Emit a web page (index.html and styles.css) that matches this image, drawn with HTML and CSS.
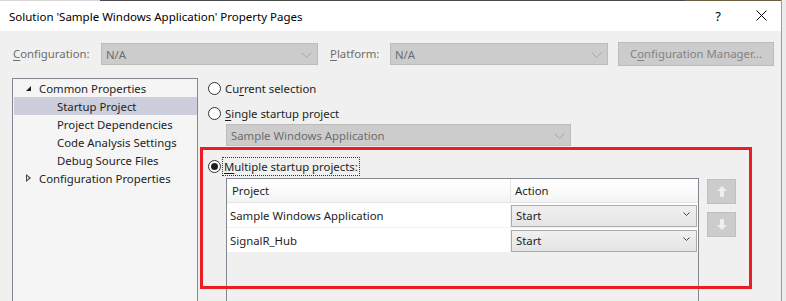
FILE: index.html
```html
<!DOCTYPE html>
<html>
<head>
<meta charset="utf-8">
<link rel="stylesheet" href="styles.css">
</head>
<body>
<div class="window">
  <div class="titlebar">
    <span class="title">Solution 'Sample Windows Application' Property Pages</span>
    <span class="help">?</span>
    <span class="close">
      <svg width="11" height="11" viewBox="0 0 11 11"><path d="M0.5 0.5 L10.5 10.5 M10.5 0.5 L0.5 10.5" stroke="#000" stroke-width="1" fill="none"/></svg>
    </span>
  </div>

  <div class="toolbar">
    <span class="lbl lbl-config"><u>C</u>onfiguration:</span>
    <div class="combo combo-config"><span>N/A</span>
      <svg class="chev" width="11" height="6" viewBox="0 0 11 6"><path d="M0.5 0.5 L5.5 5.5 L10.5 0.5" stroke="#a8a8a8" fill="none"/></svg>
    </div>
    <span class="lbl lbl-platform"><u>P</u>latform:</span>
    <div class="combo combo-platform"><span>N/A</span>
      <svg class="chev" width="11" height="6" viewBox="0 0 11 6"><path d="M0.5 0.5 L5.5 5.5 L10.5 0.5" stroke="#a8a8a8" fill="none"/></svg>
    </div>
    <div class="btn-manager">C<u>o</u>nfiguration Manager...</div>
  </div>

  <div class="main">
    <div class="tree">
      <div class="node"><span class="tri-open"></span>Common Properties</div>
      <div class="node child selected">Startup Project</div>
      <div class="node child">Project Dependencies</div>
      <div class="node child">Code Analysis Settings</div>
      <div class="node child">Debug Source Files</div>
      <div class="node"><span class="tri-closed"></span>Configuration Properties</div>
    </div>

    <div class="panel">
      <label class="radio-row r1"><span class="radio"></span>Cu<u>r</u>rent selection</label>
      <label class="radio-row r2"><span class="radio"></span><u>S</u>ingle startup project</label>
      <div class="combo combo-single"><span>Sample Windows Application</span>
        <svg class="chev" width="11" height="6" viewBox="0 0 11 6"><path d="M0.5 0.5 L5.5 5.5 L10.5 0.5" stroke="#a8a8a8" fill="none"/></svg>
      </div>
      <label class="radio-row r3"><span class="radio checked"></span><span class="focus"><u>M</u>ultiple startup projects:</span></label>

      <div class="grid-area">
        <div class="grid">
          <div class="grid-head">
            <div class="cell c-project">Project</div>
            <div class="cell c-action">Action</div>
          </div>
          <div class="grid-row">
            <div class="cell c-project">Sample Windows Application</div>
            <div class="cell c-action"><div class="action">Start<svg width="7" height="4" viewBox="0 0 7 4"><path d="M0.5 0.5 L3.5 3.5 L6.5 0.5" stroke="#444" fill="none"/></svg></div></div>
          </div>
          <div class="grid-row">
            <div class="cell c-project">SignalR_Hub</div>
            <div class="cell c-action"><div class="action">Start<svg width="7" height="4" viewBox="0 0 7 4"><path d="M0.5 0.5 L3.5 3.5 L6.5 0.5" stroke="#444" fill="none"/></svg></div></div>
          </div>
        </div>
        <div class="movers">
          <div class="mover">
            <svg width="10" height="11" viewBox="0 0 10 11"><path d="M5 0 L10 5 L7 5 L7 11 L3 11 L3 5 L0 5 Z" fill="#efefef"/></svg>
          </div>
          <div class="mover">
            <svg width="10" height="11" viewBox="0 0 10 11"><path d="M5 11 L10 6 L7 6 L7 0 L3 0 L3 6 L0 6 Z" fill="#efefef"/></svg>
          </div>
        </div>
      </div>
    </div>
  </div>

  <div class="highlight"></div>
</div>
</body>
</html>
```

FILE: styles.css
```css
* { box-sizing: border-box; }
html, body { margin: 0; padding: 0; }
body {
  width: 786px;
  height: 301px;
  overflow: hidden;
  background: #ececec;
  font-family: "Noto Sans", "Open Sans", sans-serif;
  font-size: 11.35px;
  color: #1e1e1e;
}
u { text-decoration: underline; text-underline-offset: 2px; }

.window {
  position: relative;
  width: 782px;
  height: 301px;
  background: #f0f0f0;
  border-right: 1px solid #9a9a9a;
  overflow: hidden;
}

.titlebar {
  height: 31px;
  display: flex;
  align-items: center;
  padding-left: 9px;
  background: linear-gradient(to right, #d8d8d8 0 100px, #4a4a4a 100px 685px, #6e5d40 685px) top / 100% 1px no-repeat, #ffffff;
  color: #000;
}
.title { flex: 1; padding-top: 2px; font-size: 11.5px; }
.help { width: 14px; margin-right: 31px; text-align: center; font-size: 13px; padding-top: 1px; }
.close { width: 11px; height: 11px; margin-right: 14px; display: flex; margin-bottom: 1px; }

.toolbar {
  display: flex;
  align-items: center;
  height: 23px;
  margin-top: 11px;
  padding-left: 13px;
  color: #6d6d6d;
}
.lbl { white-space: nowrap; }
.lbl-config { width: 88px; }
.lbl-platform { width: 60px; margin-left: 12px; }

.combo {
  position: relative;
  display: flex;
  align-items: center;
  height: 22px;
  background: #cccccc;
  border: 1px solid #bcbcbc;
  padding-left: 4px;
  color: #6d6d6d;
}
.combo .chev { position: absolute; right: 5px; top: 8px; }
.combo-config { width: 217px; margin-top: 1px; }
.combo-platform { width: 218px; margin-top: 1px; }
.btn-manager {
  width: 156px;
  height: 24px;
  margin-left: 10px;
  background: #cccccc;
  border: 1px solid #bcbcbc;
  display: flex;
  align-items: center;
  justify-content: center;
  color: #838383;
}

.main {
  display: flex;
  margin-top: 13px;
  padding-left: 12px;
}

.tree {
  width: 186px;
  height: 240px;
  border: 1px solid #828790;
  background: #f5f5f5;
}
.node {
  height: 18px;
  display: flex;
  align-items: center;
  padding-left: 25px;
  white-space: nowrap;
}
.node.child { padding-left: 44px; }
.node.selected { background: #cccedb; margin-left: 1px; padding-left: 43px; }
.tri-open {
  width: 0; height: 0;
  margin-left: -12px; margin-right: 8px;
  border-left: 5px solid transparent;
  border-bottom: 5px solid #1e1e1e;
  margin-top: 1px;
}
.tri-closed {
  width: 5px; height: 8px;
  margin-left: -12px; margin-right: 8px;
  position: relative;
}
.tri-closed::before {
  content: "";
  position: absolute;
  left: 0; top: 0;
  width: 0; height: 0;
  border-top: 4px solid transparent;
  border-bottom: 4px solid transparent;
  border-left: 5px solid #444;
}
.tri-closed::after {
  content: "";
  position: absolute;
  left: 1px; top: 2px;
  width: 0; height: 0;
  border-top: 2px solid transparent;
  border-bottom: 2px solid transparent;
  border-left: 2.5px solid #f5f5f5;
}

.panel {
  padding-left: 10px;
  display: flex;
  flex-direction: column;
}
.radio-row {
  height: 20px;
  display: flex;
  align-items: center;
  white-space: nowrap;
  color: #1e1e1e;
}
.r2 { margin-top: 5px; }
.r3 { margin-top: 10px; }
.radio {
  width: 13px; height: 13px;
  border: 1px solid #333333;
  border-radius: 50%;
  background: #ffffff;
  margin-right: 4px;
  display: flex;
  align-items: center;
  justify-content: center;
}
.radio.checked::after {
  content: "";
  width: 7px; height: 7px;
  border-radius: 50%;
  background: #1e1e1e;
}
.focus {
  outline: 1px dotted #333;
  outline-offset: 0;
  padding: 0 1px;
  line-height: 17px;
  margin-left: -2px;
}
.combo-single {
  width: 345px;
  height: 22px;
  margin-left: 18px;
  margin-top: 1px;
}

.grid-area {
  display: flex;
  margin-top: 2px;
  margin-left: 18px;
}
.grid {
  width: 473px;
  height: 130px;
  border: 1px solid #828790;
  border-bottom: none;
  background: #f0f0f0;
}
.grid-head {
  display: flex;
  height: 24px;
  background: linear-gradient(#ffffff, #fafafa 60%, #f2f2f2);
  border-bottom: 1px solid #e5e5e5;
}
.grid-head .cell { display: flex; align-items: center; }
.grid-head .c-project { padding-left: 5px; border-right: 1px solid #e5e5e5; }
.grid-head .c-action { padding-left: 4px; }
.c-project { width: 284px; }
.c-action { flex: 1; }
.grid-row {
  display: flex;
  height: 25px;
  background: #ffffff;
  border-bottom: 1px solid #f0f0f0;
}
.grid-row .c-project { display: flex; align-items: center; padding-left: 3px; border-right: 1px solid #f0f0f0; }
.grid-row .c-action { padding: 2px 1px 0 0; }
.action {
  height: 22px;
  border: 1px solid #acacac;
  background: linear-gradient(#f0f0f0, #e5e5e5);
  display: flex;
  align-items: center;
  justify-content: space-between;
  padding: 0 6px 2px 4px;
}
.action svg { margin-top: -2px; }

.movers {
  margin-left: 8px;
  margin-top: 1px;
  display: flex;
  flex-direction: column;
  gap: 8px;
}
.mover {
  width: 29px;
  height: 25px;
  background: #cccccc;
  border: 1px solid #bfbfbf;
  display: flex;
  align-items: center;
  justify-content: center;
}

.highlight {
  position: absolute;
  left: 200px;
  top: 147px;
  width: 552px;
  height: 142px;
  border: 3px solid #ec1c24;
  pointer-events: none;
}
```
